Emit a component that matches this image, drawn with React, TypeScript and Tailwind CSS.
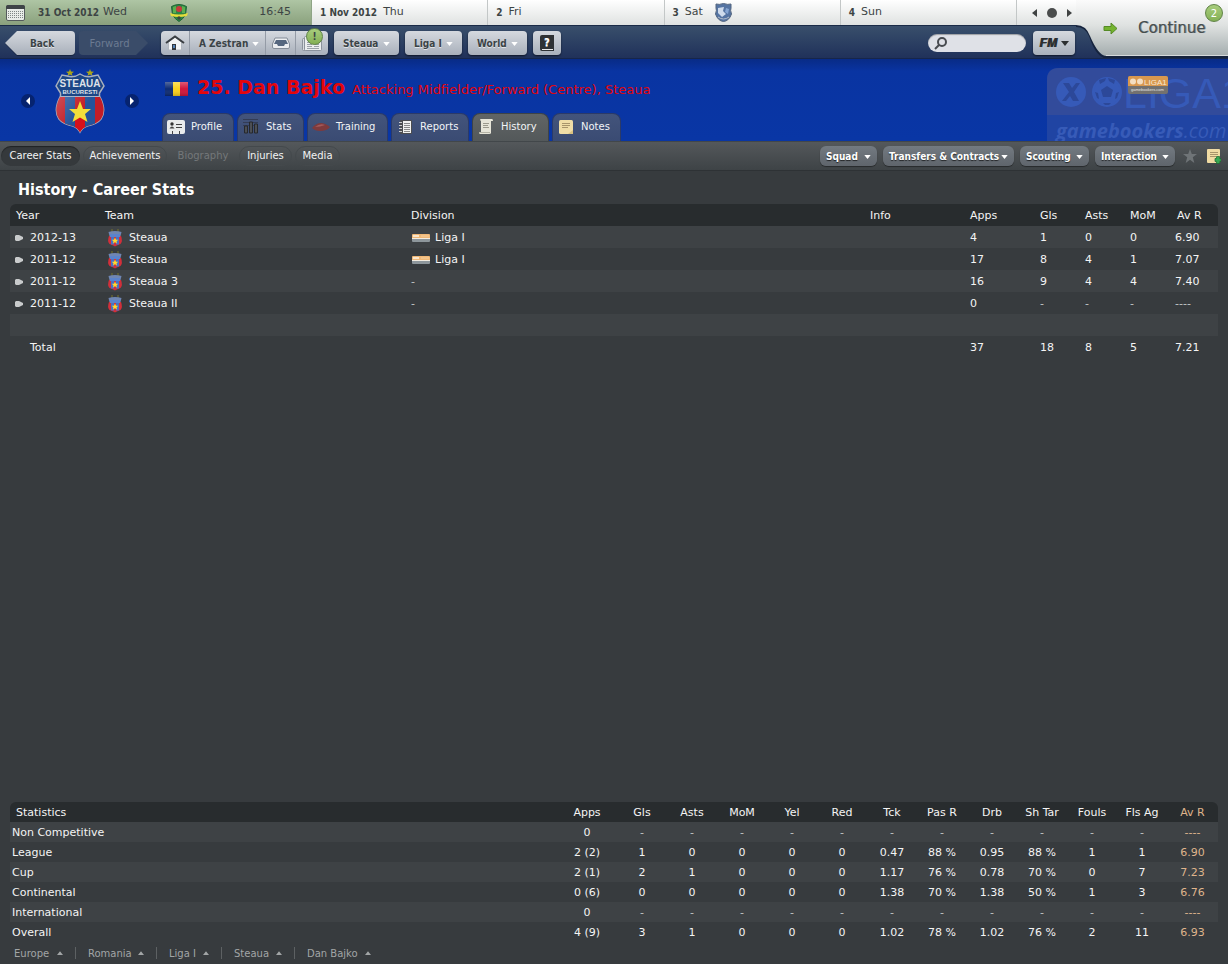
import React from 'react';

const HISTORY = [
  { year: '2012-13', team: 'Steaua', division: 'Liga I', stats: ['4', '1', '0', '0', '6.90'] },
  { year: '2011-12', team: 'Steaua', division: 'Liga I', stats: ['17', '8', '4', '1', '7.07'] },
  { year: '2011-12', team: 'Steaua 3', division: '-', stats: ['16', '9', '4', '4', '7.40'] },
  { year: '2011-12', team: 'Steaua II', division: '-', stats: ['0', '-', '-', '-', '----'] },
];

const TOTALS = ['37', '18', '8', '5', '7.21'];

const STAT_COLUMNS = ['Apps', 'Gls', 'Asts', 'MoM', 'Yel', 'Red', 'Tck', 'Pas R', 'Drb', 'Sh Tar', 'Fouls', 'Fls Ag', 'Av R'];

const STATISTICS = [
  { name: 'Non Competitive', values: ['0', '-', '-', '-', '-', '-', '-', '-', '-', '-', '-', '-', '----'] },
  { name: 'League', values: ['2 (2)', '1', '0', '0', '0', '0', '0.47', '88 %', '0.95', '88 %', '1', '1', '6.90'] },
  { name: 'Cup', values: ['2 (1)', '2', '1', '0', '0', '0', '1.17', '76 %', '0.78', '70 %', '0', '7', '7.23'] },
  { name: 'Continental', values: ['0 (6)', '0', '0', '0', '0', '0', '1.38', '70 %', '1.38', '50 %', '1', '3', '6.76'] },
  { name: 'International', values: ['0', '-', '-', '-', '-', '-', '-', '-', '-', '-', '-', '-', '----'] },
  { name: 'Overall', values: ['4 (9)', '3', '1', '0', '0', '0', '1.02', '78 %', '1.02', '76 %', '2', '11', '6.93'] },
];

const Triangle = ({ className }: { className: string }) => (
  <svg viewBox="0 0 8 5" className={className} aria-hidden="true">
    <path d="M0 0 H8 L4 5 Z" fill="currentColor" />
  </svg>
);

const Crest = () => (
  <svg viewBox="0 0 50 66" className="h-[66px] w-[50px]" role="img" aria-label="Steaua crest">
    <defs>
      <clipPath id="crest-body"><path d="M5.500 28 H44.500 Q52 42 46 51 Q42 56 32 58 Q27 60 25 64 Q23 60 18 58 Q8 56 4 51 Q-2 42 5.500 28 Z" /></clipPath>
      <linearGradient id="crest-shade" x1="0" x2="1" y1="0" y2="1">
        <stop offset="0" stopColor="#fff" stopOpacity=".35" />
        <stop offset=".6" stopColor="#fff" stopOpacity="0" />
      </linearGradient>
    </defs>
    <path d="M15 1 l1 2.500 3 .2 -2.200 1.800 .8 2.500 -2.600 -1.500 -2.600 1.500 .8 -2.500 -2.200 -1.800 3 -.2z M35 1 l1 2.500 3 .2 -2.200 1.800 .8 2.500 -2.600 -1.500 -2.600 1.500 .8 -2.500 -2.200 -1.800 3 -.2z" fill="#a9a31b" />
    <path d="M1 18 L7 7 L12 8 Q19 10 25 6 Q31 10 38 8 L43 7 L49 18 L44.500 25 V28 Q52 42 46 51 Q42 56 32 58 Q27 60 25 64 Q23 60 18 58 Q8 56 4 51 Q-2 42 5.500 28 V25 Z" fill="#1c4686" stroke="#a9b0bd" strokeWidth="1.500" />
    <g clipPath="url(#crest-body)">
      <rect width="50" height="66" fill="#c21d27" />
      <path d="M10 27 h10 v40 h-10z M30 27 h10 v40 h-10z" fill="#24539a" />
      <path d="M20 50 h10 v16 h-10z" fill="#d5101c" />
      <rect width="50" height="66" fill="url(#crest-shade)" />
    </g>
    <path d="M25 33 L28 41 H36 L30 46 L32.500 54 L25 49.500 L17.500 54 L20 46 L14 41 H22 Z" fill="#f3df3a" />
    <text x="25" y="19" textAnchor="middle" fontSize="10" fontWeight="700" fontFamily="Liberation Sans" fill="#dfe2e8">STEAUA</text>
    <text x="25" y="26" textAnchor="middle" fontSize="6" fontWeight="700" fontFamily="Liberation Sans" fill="#dfe2e8">BUCURESTI</text>
    <path d="M5 28.500 H45" stroke="#a9b7cb" />
  </svg>
);

const SmallCrest = () => (
  <svg viewBox="0 0 16 18" className="h-[18px] w-4 shrink-0" aria-hidden="true">
    <path d="M5 0v3M11 0v3" stroke="#77752a" />
    <path d="M1.500 3 Q8 1 14.500 3 L13.500 7 H2.500 Z" fill="#6f86b3" />
    <path d="M2 7 H14 Q16 12 13.500 15 Q10 16 8 17.500 Q6 16 2.500 15 Q0 12 2 7 Z" fill="#d22f3a" />
    <path d="M4 7h3v8.500H4z M9 7h3v8.500H9z" fill="#4673c4" />
    <path d="M3 5h10v3H3z" fill="#5b83cc" />
    <path d="M8 8.500l1 2.300h2.200l-1.700 1.600.6 2.200L8 13.300l-2.100 1.300.6-2.200-1.700-1.600H7z" fill="#ffd92e" />
  </svg>
);

const DivisionLogo = () => (
  <svg viewBox="0 0 18 8" className="h-2 w-[18px] shrink-0" aria-hidden="true">
    <rect width="18" height="5" rx="1" fill="#f0b877" />
    <rect y="4" width="18" height="4" rx="1" fill="#8d969b" />
    <path d="M1 2h6" stroke="#fae6cb" strokeWidth="2" />
    <path d="M9 2h8" stroke="#f6cf9f" strokeWidth="1" />
    <path d="M0 4.500h18" stroke="#f3ece0" />
  </svg>
);

const RowArrow = () => (
  <svg viewBox="0 0 8 6" className="h-1.5 w-2 shrink-0" aria-hidden="true">
    <path d="M1 0 H4 L8 2 V4 L4 6 H1 L0 5 V1 Z" fill="#c9cbcc" />
  </svg>
);

const ProfileIcon = () => (
  <svg viewBox="0 0 18 14" className="h-3.5 w-[18px]" aria-hidden="true">
    <rect width="18" height="14" rx="2" fill="#e9ebec" />
    <circle cx="5" cy="4" r="1.700" fill="#333" />
    <path d="M2.500 8.500 Q5 4.500 7.500 8.500z M9 4h6v1H9z M9 7h6v1H9z M5 11h1v3H5z M12 11h1v3h-1z" fill="#444" />
  </svg>
);

const StatsIcon = () => (
  <svg viewBox="0 0 16 15" className="h-[15px] w-4" aria-hidden="true">
    <path d="M0 .5h15M0 3.500h15M0 6.500h15" stroke="#333c55" />
    <path d="M1.500 7h3v7h-3z M6.500 3h3v11h-3z M11.500 5h3v9h-3z" fill="#4c4f54" stroke="#26282c" />
  </svg>
);

const TrainingIcon = () => (
  <svg viewBox="0 0 18 10" className="h-2.5 w-[18px]" aria-hidden="true">
    <path d="M0 6 Q4 1 9 1 Q13 1 18 5 Q15 9 8 9 Q3 9 0 6z" fill="#7e3a3d" />
    <path d="M3 5 Q8 1 13 3 Q8 5 3 5z" fill="#a45a5b" />
  </svg>
);

const ReportsIcon = () => (
  <svg viewBox="0 0 13 14" className="h-3.5 w-[13px]" aria-hidden="true">
    <rect x="1" width="12" height="14" rx="1" fill="#4c4d50" />
    <rect x="4" y="1" width="8" height="12" fill="#f2f2f0" />
    <path d="M5 3.500h6M5 5.500h6M5 7.500h6M5 9.500h6M5 11.500h6" stroke="#888" />
    <path d="M0 2.500h3M0 5.500h3M0 8.500h3M0 11.500h3" stroke="#ccc" />
  </svg>
);

const HistoryIcon = () => (
  <svg viewBox="0 0 14 15" className="h-[15px] w-3.5" aria-hidden="true">
    <path d="M1 1 Q1 0 2 0 H13 Q14 0 14 2 H12 V14 Q12 15 10 15 H1 Q0 15 0 13 H2 V2 Z" fill="#e6e5d8" />
    <path d="M4 4.500h6M4 6.500h5M4 8.500h6" stroke="#9a998c" />
    <path d="M0 13.500h11" stroke="#b5b4a6" />
  </svg>
);

const NotesIcon = () => (
  <svg viewBox="0 0 14 14" className="h-3.5 w-3.5" aria-hidden="true">
    <rect width="14" height="14" rx="1.500" fill="#f0dda6" />
    <path d="M3 3.500h8M3 5.500h8M3 7.500h6" stroke="#a8946a" />
    <path d="M14 10v4h-5z" fill="#d9c180" />
  </svg>
);

const TABS = [
  { label: 'Profile', icon: <ProfileIcon />, width: 'w-[72px]' },
  { label: 'Stats', icon: <StatsIcon />, width: 'w-[67px]' },
  { label: 'Training', icon: <TrainingIcon />, width: 'w-[81px]' },
  { label: 'Reports', icon: <ReportsIcon />, width: 'w-[78px]' },
  { label: 'History', icon: <HistoryIcon />, width: 'w-[77px]', active: true },
  { label: 'Notes', icon: <NotesIcon />, width: 'w-[69px]' },
];

const GREY_BUTTON =
  'flex h-6 items-center rounded-[4px] bg-linear-to-b from-[#d5d9df] to-[#a9b0bb] text-[10px] font-bold text-[#3b4346] shadow-[0_1px_2px_rgba(0,0,0,0.6)] text-shadow-[0_1px_0_rgba(255,255,255,0.6)]';

const CONDENSED = "font-['DejaVu_Sans_Condensed','DejaVu_Sans',sans-serif]";

const DropButton = ({ label, className }: { label: string; className: string }) => (
  <button className={`${GREY_BUTTON} ${CONDENSED} justify-between pr-[9px] pl-[9px] ${className}`} aria-haspopup="menu">
    {label}
    <Triangle className="mt-0.5 h-1 w-[7px] text-white" />
  </button>
);

const Day = ({ date, day, children }: { date: string; day: string; children?: React.ReactNode }) => (
  <div className="flex flex-1 items-center border-r border-[#c3c7c7] pl-2">
    <b className={`mr-1.5 text-[10px] ${CONDENSED}`}>{date}</b>
    <span>{day}</span>
    {children}
  </div>
);

const DateBar = () => (
  <div className="flex h-[25px] bg-linear-to-b from-white to-[#dfe2e1] text-[11px] text-[#3d4444]">
    <div className="flex w-[312px] items-center border-r border-[#8ea486] bg-linear-to-b from-[#aec5a4] to-[#8aa17d] pl-1.5">
      <svg viewBox="0 0 19 16" className="h-4 w-[19px]" aria-hidden="true">
        <rect x=".5" y=".5" width="18" height="15" rx="1.500" fill="#e8ece8" stroke="#555c5c" />
        <path d="M0 2 Q0 0 2 0 H17 Q19 0 19 2 V4 H0z" fill="#3e4447" />
        <path d="M2 6.500h15M2 8.500h15M2 10.500h15M2 12.500h15" stroke="#7f8685" strokeDasharray="1 1" />
      </svg>
      <b className={`mr-1 ml-[13px] text-[10px] ${CONDENSED}`}>31 Oct 2012</b>
      <span>Wed</span>
      <svg viewBox="0 0 18 18" className="ml-[43px] h-[18px] w-[18px]" aria-hidden="true">
        <path d="M1.500 2.500 Q9 -1.500 16.500 2.500 L15.500 11 Q13 15 9 17.500 Q5 15 2.500 11z" fill="#2d8545" stroke="#1d6436" />
        <path d="M3 3 Q5 2 6 2 V9 H3z M12 2 L15 3 V9 H12z" fill="#5bae4e" />
        <circle cx="9" cy="5" r="3" fill="#c83a3c" />
        <path d="M0 9 Q9 12 18 9 L17 12 Q9 14 1 12z" fill="#e5dd3b" />
        <circle cx="9" cy="14" r="1.700" fill="#384a3b" />
      </svg>
      <span className="ml-auto pr-5">16:45</span>
    </div>
    <Day date="1 Nov 2012" day="Thu" />
    <Day date="2" day="Fri" />
    <Day date="3" day="Sat">
      <svg viewBox="0 0 17 19" className="ml-3 h-[19px] w-[17px]" aria-hidden="true">
        <path d="M1 1 Q4 2 8.500 .5 Q13 2 16 1 V5 Q15 7 16.500 11 Q14 18 8.500 18.500 Q3 18 .5 11 Q2 7 1 5z" fill="#5574a3" stroke="#53657f" />
        <path d="M3 5 L9 4 L8 8 L11 11 L7 14 L3 10z" fill="#cfdbec" />
        <path d="M11 5 l3 1 -1 5 -3 -2z" fill="#86a6d4" />
        <path d="M3 14 Q8.500 18 14 14" stroke="#b4bdca" fill="none" />
      </svg>
    </Day>
    <Day date="4" day="Sun" />
    <div className="flex w-[211px] items-center gap-2.5 pl-[15px] text-[#3f4242]">
      <button aria-label="Previous day">
        <svg viewBox="0 0 5 8" className="h-2 w-[5px]"><path d="M5 0 V8 L0 4z" fill="currentColor" /></svg>
      </button>
      <button aria-label="Today" className="h-2.5 w-2.5 rounded-full bg-[#4a4c4c]" />
      <button aria-label="Next day">
        <svg viewBox="0 0 5 8" className="h-2 w-[5px]"><path d="M0 0 V8 L5 4z" fill="currentColor" /></svg>
      </button>
    </div>
  </div>
);

const ContinueButton = () => (
  <button className="absolute top-0 right-0 h-14 w-[152px] text-left">
    <svg viewBox="0 0 152 58" className="absolute top-0 left-0 h-[58px] w-[152px]" aria-hidden="true">
      <defs>
        <linearGradient id="continue-bg" x1="0" x2="0" y1="0" y2="1">
          <stop offset="0" stopColor="#fbfbfb" />
          <stop offset=".45" stopColor="#dfe2e1" />
          <stop offset="1" stopColor="#a3acad" />
        </linearGradient>
      </defs>
      <path d="M0 26 Q10 26 14 36 Q20 54 28 57 H152" fill="none" stroke="#15233d" strokeWidth="2" />
      <path d="M0 0 H152 V56 H30 Q22 55 14 36 Q10 25 0 25 Z" fill="url(#continue-bg)" />
      <path d="M152 55.500 H30" stroke="#d6dadb" />
      <path d="M28 26.500h7v-3.500l6 5.500-6 5.500v-3.500h-7z" fill="#74b32f" stroke="#558a26" />
    </svg>
    <span className="relative ml-[62px] text-[15px] text-[#454e4f] text-shadow-[1px_0_0_rgba(69,78,79,0.5)]">Continue</span>
    <span className="absolute top-1 right-[5px] flex h-[18px] w-[18px] items-center justify-center rounded-full border border-[#5f8345] bg-linear-to-b from-[#a8cd7d] to-[#84b055] text-[10px] text-white">2</span>
  </button>
);

const NavBar = () => (
  <div className={`flex h-[34px] items-start border-t border-b border-t-[#1a2b47] border-b-[#17264a] bg-linear-to-b from-[#394f6b] to-[#20315a] pt-[5px] pr-[153px] pl-[5px] ${CONDENSED}`}>
    <button className="relative h-6 w-[70px] text-[10px] font-bold text-[#3b4346] text-shadow-[0_1px_0_rgba(255,255,255,0.6)]">
      <svg viewBox="0 0 70 25" className="absolute top-0 left-0 h-[25px] w-[70px]" aria-hidden="true">
        <defs>
          <linearGradient id="back-bg" x1="0" x2="0" y1="0" y2="1">
            <stop offset="0" stopColor="#d5d9df" />
            <stop offset="1" stopColor="#a9b0bb" />
          </linearGradient>
        </defs>
        <path d="M0 12.500 L12 1 H66 Q70 1 70 5 V21 Q70 25 66 25 H12 Z" fill="#16233f" />
        <path d="M0 12 L12 0 H66 Q70 0 70 4 V20 Q70 24 66 24 H12 Z" fill="url(#back-bg)" />
      </svg>
      <span className="relative ml-1">Back</span>
    </button>
    <button disabled className="relative ml-1 h-6 w-[69px] text-[10px] text-[#6c7b92]">
      <svg viewBox="0 0 69 24" className="absolute top-0 left-0 h-6 w-[69px]" aria-hidden="true">
        <path d="M4 0 H57 L69 12 L57 24 H4 Q0 24 0 20 V4 Q0 0 4 0z" fill="#3a4c69" />
      </svg>
      <span className="relative mr-2 font-['DejaVu_Sans',sans-serif]">Forward</span>
    </button>
    <div className={`${GREY_BUTTON} ml-[13px] divide-x divide-[#949ba6]`}>
      <button className="flex h-6 w-[29px] items-center justify-center" aria-label="Home">
        <svg viewBox="0 0 20 16" className="h-4 w-5">
          <path d="M3.500 7 L10 2 L16.500 7 V15 H3.500z" fill="#f3f4f5" stroke="#b3b8bf" />
          <path d="M1 8 L10 1.500 L19 8" fill="none" stroke="#3a3e42" strokeWidth="2" />
          <rect x="7" y="9" width="4" height="6" fill="#32373d" />
          <rect x="8" y="10" width="2" height="3" fill="#5584b8" />
        </svg>
      </button>
      <button className="flex h-6 w-[76px] items-center justify-between pr-[6px] pl-[9px]" aria-haspopup="menu">
        A Zestran
        <Triangle className="mt-0.5 h-1 w-[7px] text-white" />
      </button>
      <button className="flex h-6 w-[30px] items-center justify-center" aria-label="Inbox">
        <svg viewBox="0 0 18 12" className="h-3 w-[18px]">
          <path d="M3 1 H15 L17.500 7 V10 Q17.500 11.500 16 11.500 H2 Q.5 11.500 .5 10 V7z" fill="#eceef1" stroke="#858d98" />
          <path d="M4 3 H14 L16 7 H13 L12 9 H6 L5 7 H2z" fill="#56677f" />
        </svg>
      </button>
      <button className="relative flex h-6 w-8 items-center pl-1.5" aria-label="News">
        <svg viewBox="0 0 20 15" className="h-[15px] w-5">
          <rect x=".5" y="2.500" width="5" height="12" rx="1" fill="#d9dce0" stroke="#8b929c" />
          <rect x="2.500" y=".5" width="17" height="14" rx="1" fill="#eceef0" stroke="#8b929c" />
          <path d="M5 3.500h12M5 6.500h5M12 6.500h5M5 8.500h5M12 8.500h5M5 10.500h5M12 10.500h5M5 12.500h12" stroke="#9ba1a9" />
        </svg>
        <span className="absolute -top-[3px] right-[5px] flex h-[17px] w-[17px] items-center justify-center rounded-full border border-[#5f8345] bg-linear-to-b from-[#a8cd7d] to-[#84b055] text-[10px]">!</span>
      </button>
    </div>
    <DropButton label="Steaua" className="ml-1.5 w-[65px]" />
    <DropButton label="Liga I" className="ml-1.5 w-[57px]" />
    <DropButton label="World" className="ml-1.5 w-[59px]" />
    <button className={`${GREY_BUTTON} ml-1.5 w-7 justify-center`} aria-label="Help">
      <svg viewBox="0 0 14 16" className="h-4 w-3.5">
        <path d="M2 0 H14 V16 H2 Q0 16 0 14 V2 Q0 0 2 0z" fill="#2e3134" />
        <path d="M2 14.500 H13" stroke="#e8e8e8" />
        <text x="7" y="11" textAnchor="middle" fontSize="10" fontWeight="700" fontFamily="DejaVu Sans" fill="#fff">?</text>
      </svg>
    </button>
    <label className="mt-[3px] ml-auto flex h-[18px] w-[98px] items-center rounded-full bg-[#dfe1e7] pl-1.5 shadow-[inset_0_1px_1px_rgba(0,0,0,0.3)]">
      <svg viewBox="0 0 13 13" className="h-[13px] w-[13px] shrink-0" aria-hidden="true">
        <circle cx="8" cy="5" r="4" fill="none" stroke="#484b50" strokeWidth="2" />
        <path d="M5 8 L1 12" stroke="#484b50" strokeWidth="2" />
      </svg>
      <input aria-label="Search" className="w-full min-w-0 bg-transparent text-[10px] text-[#333] outline-none" />
    </label>
    <button className={`${GREY_BUTTON} ml-[7px] w-[42px] justify-center gap-1`} aria-haspopup="menu">
      <span className="font-['Liberation_Sans',sans-serif] text-xs font-bold text-[#2b2e30] italic text-shadow-[1px_0_0_#2b2e30]">FM</span>
      <Triangle className="h-[5px] w-2 text-[#2b2e30]" />
    </button>
  </div>
);

const SponsorMark = () => (
  <svg viewBox="0 0 181 73" className="absolute right-0 bottom-0 h-[73px] w-[181px]" aria-label="Liga 1 gamebookers.com">
    <path d="M0 73 V12 Q0 0 12 0 H181 V73z" fill="#2044a3" />
    <path d="M0 47 V12 Q0 0 12 0 H181 V47z" fill="#324b9b" />
    <circle cx="24" cy="24" r="15" fill="#365ab8" />
    <path d="M16 15h6l3 5 4-5h4l-6 9 5 9h-6l-3-5-4 5h-4l7-9z" fill="#2c4899" />
    <circle cx="60" cy="24" r="14" fill="#365ab8" stroke="#365ab8" strokeWidth="2" />
    <path d="M60 18l6 4-2 7h-8l-2-7z M52 12l7-2-1 3-5 3z M68 12l-7-2 1 3 5 3z M48 24l3 1 1 6-2-1z M72 24l-3 1-1 6 2-1z M56 35h8l-2 2h-4z" fill="#2c4899" />
    <text x="76" y="40" fontSize="43" fontFamily="Liberation Sans" fill="#365ab8">LIGA1</text>
    <text x="9" y="70" fontSize="20" fontWeight="700" fontStyle="italic" fontFamily="Open Sans" fill="#375bb8">gamebookers<tspan fontWeight="400">.com</tspan></text>
    <rect x="81" y="8" width="40" height="18" rx="2" fill="#73716f" />
    <path d="M81 18 V10 Q81 8 83 8 H119 Q121 8 121 10 V18z" fill="#d9984f" />
    <circle cx="86" cy="13.500" r="3" fill="#f3ddc1" />
    <circle cx="93" cy="13.500" r="3" fill="#f3ddc1" />
    <text x="97" y="17" fontSize="8" fontFamily="Liberation Sans" fill="#f8e8d3">LIGA1</text>
    <text x="84" y="23" fontSize="4" fontFamily="Liberation Sans" fill="#e5e5e5">gamebookers.com</text>
  </svg>
);

const PlayerBanner = () => (
  <div className="relative flex h-[82px] bg-linear-to-b from-[#082b86] via-[#0934a2] via-15% to-[#0936a5]">
    <SponsorMark />
    <div className="relative flex w-40 items-center justify-center gap-5 pt-0.5">
      <button aria-label="Previous player" className="flex h-3.5 w-3.5 items-center justify-center rounded-full bg-[#06236f] text-white">
        <svg viewBox="0 0 4 8" className="h-2 w-1"><path d="M4 0V8L0 4z" fill="currentColor" /></svg>
      </button>
      <Crest />
      <button aria-label="Next player" className="flex h-3.5 w-3.5 items-center justify-center rounded-full bg-[#06236f] text-white">
        <svg viewBox="0 0 4 8" className="h-2 w-1"><path d="M0 0V8L4 4z" fill="currentColor" /></svg>
      </button>
    </div>
    <div className="relative ml-0.5 flex flex-col justify-between">
      <div className="flex items-center pt-4 pl-[3px]">
        <svg viewBox="0 0 23 14" className="mr-[9px] h-3.5 w-[23px] shrink-0" role="img" aria-label="Romania">
          <defs>
            <linearGradient id="flag-shine" x1="0" x2="0" y1="0" y2="1">
              <stop offset="0" stopColor="#fff" stopOpacity=".3" />
              <stop offset=".5" stopColor="#fff" stopOpacity="0" />
              <stop offset="1" stopColor="#000" stopOpacity=".2" />
            </linearGradient>
          </defs>
          <rect width="8" height="14" fill="#0c2a72" />
          <rect x="8" width="7" height="14" fill="#fbd01b" />
          <rect x="15" width="8" height="14" fill="#d0143a" />
          <rect width="23" height="14" fill="url(#flag-shine)" />
        </svg>
        <h1 className="flex items-baseline leading-6 text-[#e3060c]">
          <span className="mr-[7px] text-[19px] font-bold">25. Dan Bajko</span>
          <span className="text-[13px]">Attacking Midfielder/Forward (Centre), Steaua</span>
        </h1>
      </div>
      <nav className="flex gap-[3px]">
        {TABS.map((tab) => (
          <a
            key={tab.label}
            href="#"
            className={`flex h-7 items-center rounded-t-lg border border-b-0 pb-0.5 pl-[3px] text-[10px] text-[#f2f4f6] ${tab.width} ${
              tab.active
                ? 'border-[#3d4347] bg-linear-to-b from-[#616565] to-[#53585a]'
                : 'border-[#2b3a68] bg-linear-to-b from-[#43547b] to-[#3a4b73]'
            }`}
          >
            <span className="mr-[5px] flex w-5 justify-center">{tab.icon}</span>
            {tab.label}
          </a>
        ))}
      </nav>
    </div>
  </div>
);

const SUB_PILL = 'flex h-5 items-center justify-center rounded-full pb-px text-[10px]';

const ACTION =
  'flex h-5 items-center justify-between rounded-md bg-linear-to-b from-[#737a81] to-[#5f656c] px-[6px] text-[10px] font-bold text-white shadow-[0_1px_1px_rgba(0,0,0,0.4)] text-shadow-[0_1px_1px_rgba(0,0,0,0.7)]';

const ACTIONS = [
  { label: 'Squad', width: 'w-[57px]' },
  { label: 'Transfers & Contracts', width: 'w-[131px]' },
  { label: 'Scouting', width: 'w-[69px]' },
  { label: 'Interaction', width: 'w-[80px]' },
];

const SubNav = () => (
  <div className="flex h-[30px] items-center border-t border-b border-t-[#42474a] border-b-[#2e3235] bg-linear-to-b from-[#54585b] to-[#3e4346] pr-[7px] pl-px text-[#f2f3f3]">
    <nav className="flex gap-[3px]">
      <a href="#" className={`${SUB_PILL} w-[79px] bg-[#35393c] shadow-[inset_0_1px_1px_rgba(0,0,0,0.4)]`}>Career Stats</a>
      <a href="#" className={`${SUB_PILL} w-[84px] border border-[#44494c]`}>Achievements</a>
      <span className={`${SUB_PILL} w-[66px] text-[#74787a]`}>Biography</span>
      <a href="#" className={`${SUB_PILL} w-[53px] border border-[#44494c]`}>Injuries</a>
      <a href="#" className={`${SUB_PILL} w-[45px] border border-[#44494c]`}>Media</a>
    </nav>
    <div className={`ml-auto flex items-center gap-1.5 ${CONDENSED}`}>
      {ACTIONS.map((action) => (
        <button key={action.label} className={`${ACTION} ${action.width}`} aria-haspopup="menu">
          {action.label}
          <Triangle className="mt-0.5 h-1 w-[7px] shrink-0" />
        </button>
      ))}
      <button aria-label="Shortlist" className="ml-0.5">
        <svg viewBox="0 0 14 14" className="h-3.5 w-3.5">
          <path d="M7 0l1.800 5H14l-4.200 3.300L11.300 14 7 10.700 2.700 14l1.500-5.700L0 5h5.200z" fill="#6f7477" />
        </svg>
      </button>
      <button aria-label="Add note" className="ml-1">
        <svg viewBox="0 0 14 15" className="h-[15px] w-3.5">
          <rect width="13" height="14" rx="1" fill="#f0dba3" />
          <path d="M3 3.500h8M3 5.500h8M3 7.500h6" stroke="#a8946a" />
          <path d="M9.500 7.500h3v2h1.500v3h-1.500v2h-3v-2H8v-3h1.500z" fill="#36a853" stroke="#17662b" strokeWidth=".7" />
        </svg>
      </button>
    </div>
  </div>
);

const isBlank = (value: string) => value.startsWith('-');

const HistoryTable = () => (
  <table className="w-full table-fixed text-left [&_td]:pt-0.5 [&_th]:pt-0.5">
    <colgroup>
      <col className="w-[95px]" />
      <col className="w-[306px]" />
      <col />
      <col className="w-[100px]" />
      <col className="w-[70px]" />
      <col className="w-[45px]" />
      <col className="w-[45px]" />
      <col className="w-[45px]" />
      <col className="w-[43px]" />
    </colgroup>
    <thead>
      <tr className="h-[22px] bg-[#282c2e] *:font-normal">
        <th className="rounded-tl-md"><span className="ml-1.5">Year</span></th>
        <th>Team</th>
        <th>Division</th>
        <th>Info</th>
        <th>Apps</th>
        <th>Gls</th>
        <th>Asts</th>
        <th>MoM</th>
        <th className="rounded-tr-md"><span className="ml-0.5">Av R</span></th>
      </tr>
    </thead>
    <tbody>
      {HISTORY.map((row, i) => (
        <tr key={i} className="h-[22px] odd:bg-[#3e4245]">
          <td>
            <div className="flex items-center gap-[7px] pl-[5px]">
              <RowArrow />
              {row.year}
            </div>
          </td>
          <td>
            <div className="flex items-center gap-1.5 pl-0.5">
              <SmallCrest />
              {row.team}
            </div>
          </td>
          <td>
            {row.division === '-' ? (
              <span className="text-[#c3c5c6]">-</span>
            ) : (
              <div className="flex items-center gap-[5px] pl-px">
                <DivisionLogo />
                {row.division}
              </div>
            )}
          </td>
          <td />
          {row.stats.map((value, j) => (
            <td key={j} className={isBlank(value) ? 'text-[#c3c5c6]' : ''}>{value}</td>
          ))}
        </tr>
      ))}
      <tr className="h-[22px] bg-[#3e4245]">
        <td colSpan={9} />
      </tr>
      <tr className="h-[22px]">
        <td colSpan={4}><span className="ml-5">Total</span></td>
        {TOTALS.map((value, j) => (
          <td key={j}>{value}</td>
        ))}
      </tr>
    </tbody>
  </table>
);

const StatisticsTable = () => (
  <table className="mt-auto w-full table-fixed text-center [&_td]:pt-0.5 [&_th]:pt-0.5">
    <colgroup>
      <col />
      <col className="w-[60px]" />
      <col span={11} className="w-[50px]" />
      <col className="w-[51px]" />
    </colgroup>
    <thead>
      <tr className="h-5 bg-[#282c2e] *:font-normal">
        <th className="rounded-tl-md text-left"><span className="ml-1.5">Statistics</span></th>
        {STAT_COLUMNS.map((name) => (
          <th key={name} className="last:rounded-tr-md last:text-[#dfb48c]">{name}</th>
        ))}
      </tr>
    </thead>
    <tbody>
      {STATISTICS.map((row) => (
        <tr key={row.name} className="h-5 odd:bg-[#3e4245]">
          <td className="pl-0.5 text-left">{row.name}</td>
          {row.values.map((value, i) => (
            <td key={i} className={`last:text-[#dfb48c] ${isBlank(value) ? 'text-[#c3c5c6]' : ''}`}>{value}</td>
          ))}
        </tr>
      ))}
    </tbody>
  </table>
);

const CRUMBS = [
  { label: 'Europe', width: 'w-[74px]' },
  { label: 'Romania', width: 'w-[81px]' },
  { label: 'Liga I', width: 'w-[65px]' },
  { label: 'Steaua', width: 'w-[73px]' },
  { label: 'Dan Bajko', width: 'w-[88px]' },
];

const Breadcrumbs = () => (
  <nav className="flex h-[22px] items-center divide-x divide-[#5d6163] pl-[2px] text-[10px] text-[#a2a5a6]">
    {CRUMBS.map((crumb) => (
      <a key={crumb.label} href="#" className={`flex h-3 items-center justify-between px-3 whitespace-nowrap ${crumb.width}`}>
        {crumb.label}
        <Triangle className="h-1 w-1.5 shrink-0 rotate-180" />
      </a>
    ))}
  </nav>
);

export default function App() {
  return (
    <div className="flex min-h-screen flex-col bg-[#373b3e] font-['DejaVu_Sans',sans-serif]">
      <header className="relative z-10">
        <DateBar />
        <NavBar />
        <ContinueButton />
      </header>
      <PlayerBanner />
      <SubNav />
      <main className="flex flex-1 flex-col px-2.5 text-[11px] leading-4 text-[#f4f4f4]">
        <h2 className={`mb-1 pt-[9px] pl-2 text-base leading-5 font-bold text-white ${CONDENSED}`}>History - Career Stats</h2>
        <HistoryTable />
        <StatisticsTable />
      </main>
      <Breadcrumbs />
    </div>
  );
}
